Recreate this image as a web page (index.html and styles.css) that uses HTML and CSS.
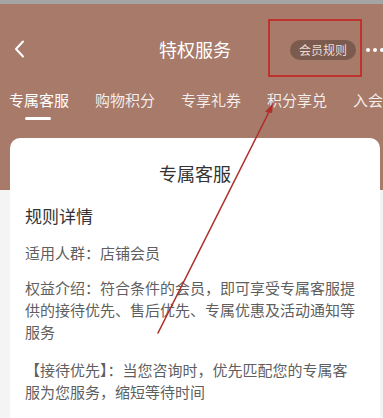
FILE: index.html
```html
<!DOCTYPE html>
<html lang="zh">
<head>
<meta charset="utf-8">
<link rel="stylesheet" href="styles.css">
</head>
<body>
<div class="statusbar"></div>
<header class="hero">
  <div class="nav">
    <svg class="back" width="12" height="18" viewBox="0 0 12 18"><polyline points="9,1.5 2,9 9,16.5" fill="none" stroke="#fff" stroke-width="2" stroke-linecap="round" stroke-linejoin="round"/></svg>
    <div class="title">特权服务</div>
    <div class="badge">会员规则</div>
    <div class="more"><span></span><span></span><span></span></div>
  </div>
  <nav class="tabs">
    <div class="tab active">专属客服</div>
    <div class="tab">购物积分</div>
    <div class="tab">专享礼券</div>
    <div class="tab">积分享兑</div>
    <div class="tab">入会</div>
  </nav>
</header>
<main class="card">
  <h1 class="card-title">专属客服</h1>
  <h2 class="section">规则详情</h2>
  <p class="text">适用人群：店铺会员</p>
  <p class="text">权益介绍：符合条件的会员，即可享受专属客服提供的接待优先、售后优先、专属优惠及活动通知等服务</p>
  <p class="text">【接待优先】：当您咨询时，优先匹配您的专属客服为您服务，缩短等待时间</p>
</main>
<div class="mark-box"></div>
<svg class="mark-arrow" width="383" height="418" viewBox="0 0 383 418">
  <line x1="158" y1="333" x2="270" y2="110" stroke="#b0302b" stroke-width="1.6" stroke-linecap="round"/>
  <polygon points="273,103 265,112 272,113" fill="#b0302b"/>
</svg>
</body>
</html>
```
FILE: styles.css
```css
html, body {
  margin: 0;
  padding: 0;
}
body {
  width: 383px;
  height: 418px;
  overflow: hidden;
  background: #f4f4f4;
  font-family: "Noto Sans CJK SC", "Noto Sans", sans-serif;
  position: relative;
}
.statusbar {
  height: 4px;
  background: #a5a4a4;
}
.hero {
  background: #a77a69;
  height: 186px;
  color: #fff;
}
.nav {
  position: relative;
  height: 38px;
  padding-top: 26px;
  display: flex;
  align-items: center;
}
.back {
  margin-left: 14px;
}
.title {
  position: absolute;
  left: 0;
  right: 0;
  top: 26px;
  height: 38px;
  line-height: 38px;
  text-align: center;
  font-size: 18px;
  padding-left: 7px;
  pointer-events: none;
}
.badge {
  margin-left: auto;
  height: 20px;
  line-height: 20px;
  padding: 0 9px;
  border-radius: 10px;
  background: #7c5b4f;
  color: #eadcd4;
  font-size: 12px;
  margin-top: 2px;
}
.more {
  display: flex;
  gap: 3px;
  margin-left: 10px;
  margin-right: -1px;
  margin-top: 2px;
}
.more span {
  width: 4px;
  height: 4px;
  border-radius: 50%;
  background: #fff;
}
.tabs {
  display: flex;
  gap: 26px;
  margin-top: 22px;
  padding-left: 9px;
  white-space: nowrap;
  overflow: hidden;
}
.tab {
  font-size: 15px;
  line-height: 20px;
  color: rgba(255, 255, 255, 0.88);
  position: relative;
  flex: none;
  padding-bottom: 10px;
}
.tab.active {
  color: #fff;
}
.tab.active::after {
  content: "";
  position: absolute;
  left: 16px;
  width: 26px;
  top: 27px;
  height: 3px;
  border-radius: 2px;
  background: #fff;
}
.card {
  display: block;
  box-sizing: border-box;
  margin: -52px 3px 0 10px;
  background: #fff;
  border-radius: 10px 10px 0 0;
  padding: 23px 20px 0 15px;
  height: 280px;
}
.card-title {
  margin: 0;
  font-size: 18px;
  font-weight: normal;
  line-height: 24px;
  text-align: center;
  color: #333;
  padding-left: 5px;
}
.section {
  margin: 19px 0 0;
  font-size: 17px;
  font-weight: normal;
  line-height: 24px;
  color: #333;
}
.text {
  margin: 14px 0 0;
  font-size: 15px;
  line-height: 22px;
  color: #5f5f5f;
}
.text + .text {
  margin-top: 13px;
}
.text:last-child {
  margin-top: 16px;
}
.mark-box {
  position: absolute;
  left: 268px;
  top: 19px;
  width: 90px;
  height: 54px;
  border: 2px solid #bf332e;
}
.mark-arrow {
  position: absolute;
  left: 0;
  top: 0;
  pointer-events: none;
}
```
